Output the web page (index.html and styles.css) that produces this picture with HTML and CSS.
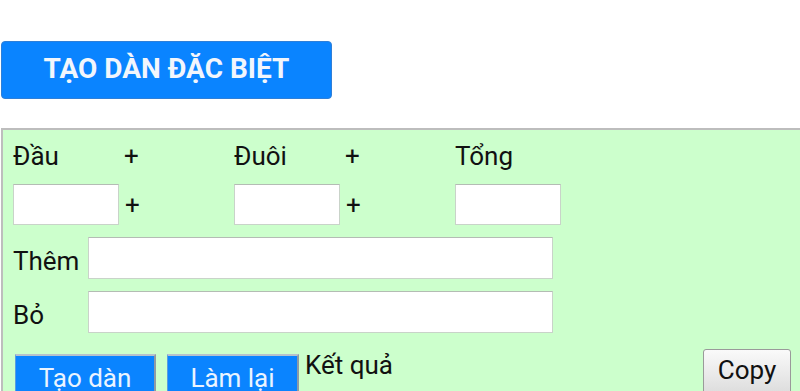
FILE: index.html
```html
<!DOCTYPE html>
<html lang="vi">
<head>
<meta charset="utf-8">
<title>Tạo dàn đặc biệt</title>
<link rel="stylesheet" href="styles.css">
</head>
<body>
<div class="page">
  <button class="title-btn">TẠO DÀN ĐẶC BIỆT</button>
  <div class="panel">
    <div class="sum-grid">
      <span class="lbl">Đầu</span><span class="plus">+</span>
      <span class="lbl">Đuôi</span><span class="plus">+</span>
      <span class="lbl">Tổng</span>
      <span class="cell"><input class="small-input" type="text"></span><span class="plus mid">+</span>
      <span class="cell"><input class="small-input" type="text"></span><span class="plus mid">+</span>
      <span class="cell"><input class="small-input" type="text"></span>
    </div>
    <div class="field-row">
      <label class="field-label">Thêm</label>
      <input class="wide-input" type="text">
    </div>
    <div class="field-row">
      <label class="field-label">Bỏ</label>
      <input class="wide-input" type="text">
    </div>
    <div class="actions">
      <button class="blue-btn btn-create">Tạo dàn</button>
      <button class="blue-btn btn-reset">Làm lại</button>
      <span class="result-label">Kết quả</span>
      <button class="copy-btn">Copy</button>
    </div>
  </div>
</div>
</body>
</html>
```

FILE: styles.css
```css
html, body {
  margin: 0;
  padding: 0;
  background: #ffffff;
  overflow: hidden;
  height: 391px;
}

body {
  font-family: Roboto, "Noto Sans", "Liberation Sans", sans-serif;
  color: #111;
  font-size: 26px;
}

.page {
  padding-top: 41px;
  padding-left: 1px;
}

.title-btn {
  display: block;
  width: 331px;
  height: 58px;
  margin: 0;
  padding: 0;
  border: 1px solid #2f7fd8;
  border-radius: 4px;
  background: #0a84ff;
  color: #f2f6fc;
  font-family: Roboto, "Noto Sans", sans-serif;
  font-weight: 700;
  font-size: 28px;
  line-height: 32px;
  padding-bottom: 2px;
}

.panel {
  margin-top: 29px;
  width: 830px;
  height: 263px;
  overflow: hidden;
  background: #ccffcc;
  border-top: 2px solid #bdbdbd;
  border-left: 2px solid #bdbdbd;
  padding: 11px 0 0 10px;
  box-sizing: border-box;
}

.sum-grid {
  display: grid;
  grid-template-columns: 110px 111px 110px 111px 120px;
  grid-template-rows: 30px 41px;
  row-gap: 13px;
  align-items: center;
}

.lbl, .plus {
  line-height: 30px;
}

.plus {
  padding-left: 1px;
}

.plus.mid {
  padding-left: 2px;
}

.cell {
  display: flex;
}

.small-input {
  width: 106px;
  height: 41px;
  box-sizing: border-box;
  margin: 0;
  background: #fff;
  border: 1px solid #c9d3c9;
  border-top-color: #b4bcb4;
}

.field-row {
  display: flex;
  align-items: center;
  margin-top: 12px;
}

.field-label {
  width: 75px;
  line-height: 30px;
  padding-top: 5px;
}

.wide-input {
  width: 465px;
  height: 42px;
  box-sizing: border-box;
  margin: 0;
  background: #fff;
  border: 1px solid #c9d3c9;
  border-top-color: #b4bcb4;
}

.actions {
  display: flex;
  align-items: flex-start;
  margin-top: 16px;
  padding-right: 40px;
  padding-left: 2px;
}

.blue-btn {
  margin: 5px 0 0 0;
  height: 42px;
  padding: 0;
  box-sizing: border-box;
  background: #0a84ff;
  color: #eaf4ff;
  font-family: Roboto, "Noto Sans", sans-serif;
  font-size: 26px;
  line-height: 30px;
  border-style: solid;
  border-width: 2px 2px 0 1px;
  border-color: #b7c2cc #8e9aa5 #8e9aa5 #5a9be0;
  border-radius: 0;
  padding-top: 4px;
}

.btn-create {
  width: 141px;
}

.btn-reset {
  width: 132px;
  margin-left: 11px;
}

.result-label {
  margin-left: 6px;
  line-height: 30px;
  margin-top: 1px;
}

.copy-btn {
  margin: 0 0 0 auto;
  width: 88px;
  height: 46px;
  padding: 0;
  border: 1px solid #9a9a9a;
  border-radius: 3px;
  background: linear-gradient(#fafafa, #dcdcdc);
  color: #111;
  font-family: Roboto, "Noto Sans", sans-serif;
  font-size: 26px;
  line-height: 30px;
  padding-bottom: 4px;
}
```
